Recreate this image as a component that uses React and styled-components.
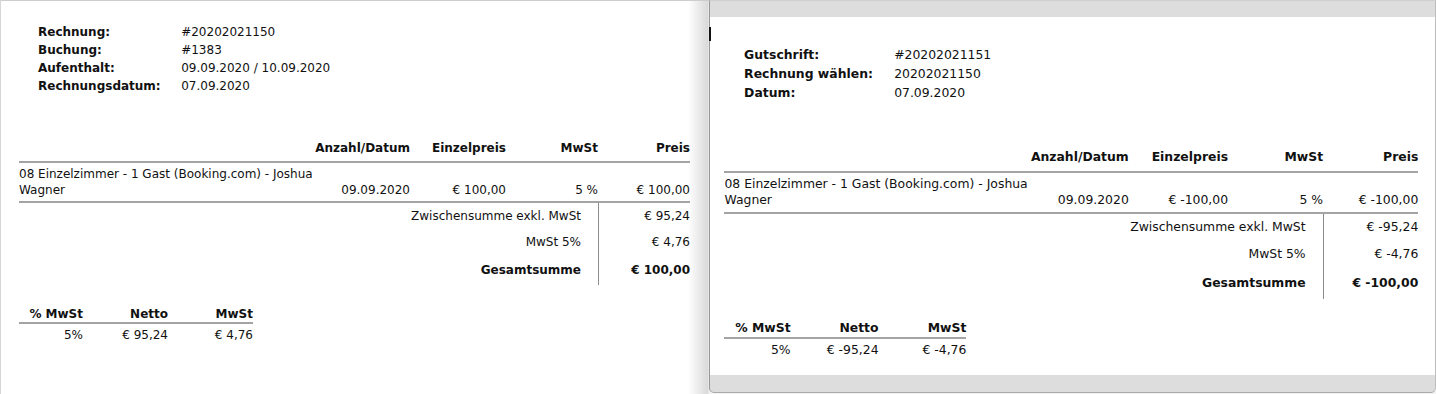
import React from "react";
import styled, { createGlobalStyle } from "styled-components";

const Global = createGlobalStyle`
  html, body { margin: 0; padding: 0; background: #f3f3f3; }
  body { font-family: "DejaVu Sans", "Noto Sans", sans-serif; font-size: 12px; color: #111; }
  * { box-sizing: border-box; }
`;

const Page = styled.div`
  display: flex;
  width: 1436px;
  height: 394px;
  overflow: hidden;
`;

const LeftPane = styled.div`
  width: 709px;
  height: 394px;
  flex: none;
  border-top: 1px solid #cdcdcd;
  border-left: 1px solid #d6d6d6;
  background: linear-gradient(to right, #fff calc(100% - 21px), #d9d9d9 calc(100% - 1px), #f4f4f4);
`;

const RightWindow = styled.div`
  position: relative;
  flex: 1;
  height: 393px;
  display: flex;
  flex-direction: column;
  padding: 16px 0 17px;
  background: #dddddd;
  border-top: 1px solid #cfcfcf;
  border-left: 1px solid #979797;
  border-right: 1px solid #bdbdbd;
  border-bottom: 1px solid #a9a9a9;
  border-radius: 0 0 5px 5px;
  &::before {
    content: "";
    position: absolute;
    left: -1px;
    top: 26px;
    width: 2px;
    height: 14px;
    background: #111;
  }
`;

const WhitePane = styled.div`
  flex: 1;
  background: #fff;
`;

const Sheet = styled.div`
  zoom: ${(p) => p.$zoom || 1};
  width: ${(p) => 671 + p.$padLeft}px;
  padding: ${(p) => p.$padTop}px 0 0 ${(p) => p.$padLeft}px;
  line-height: 16px;
`;

const MetaList = styled.dl`
  display: grid;
  grid-template-columns: max-content max-content;
  column-gap: 20.5px;
  margin: 0 0 0 19px;
  line-height: 18px;
`;

const MetaLabel = styled.dt`
  font-weight: bold;
  margin: 0;
`;

const MetaValue = styled.dd`
  margin: 0;
`;

const ItemTable = styled.div`
  width: 671px;
  margin-top: 45px;
`;

const Row = styled.div`
  display: grid;
  grid-template-columns: 1fr 96px 96px 92px 92px;
  align-items: end;
  border-bottom: 2px solid #a4a4a4;
  padding: ${(p) => (p.$head ? "0 0 5px" : "3px 0 3px")};
  font-weight: ${(p) => (p.$head ? "bold" : "normal")};
`;

const Cell = styled.div`
  text-align: ${(p) => (p.$left ? "left" : "right")};
  white-space: ${(p) => (p.$left ? "normal" : "nowrap")};
`;

const SumRow = styled.div`
  display: grid;
  grid-template-columns: 1fr 92px;
  font-weight: ${(p) => (p.$bold ? "bold" : "normal")};
`;

const SumLabel = styled.div`
  text-align: right;
  padding: ${(p) => (p.$last ? "7px 17px 7px 0" : "5px 17px 5px 0")};
`;

const SumValue = styled.div`
  text-align: right;
  border-left: 1px solid #8c8c8c;
  padding: ${(p) => (p.$last ? "7px 0 7px" : "5px 0 5px")};
  white-space: nowrap;
`;

const VatTable = styled.div`
  width: 234px;
  margin-top: 21px;
`;

const VatRow = styled.div`
  display: grid;
  grid-template-columns: 64px 85px 85px;
  text-align: right;
  white-space: nowrap;
  font-weight: ${(p) => (p.$head ? "bold" : "normal")};
  border-bottom: ${(p) => (p.$head ? "2px solid #a4a4a4" : "none")};
  padding-top: ${(p) => (p.$head ? 0 : 3)}px;
`;

function Invoice({ meta, item, sums, vat, zoom, padTop, padLeft }) {
  return (
    <Sheet $zoom={zoom} $padTop={padTop} $padLeft={padLeft}>
      <MetaList>
        {meta.map(([k, v]) => (
          <React.Fragment key={k}>
            <MetaLabel>{k}</MetaLabel>
            <MetaValue>{v}</MetaValue>
          </React.Fragment>
        ))}
      </MetaList>
      <ItemTable>
        <Row $head>
          <Cell $left />
          <Cell>Anzahl/Datum</Cell>
          <Cell>Einzelpreis</Cell>
          <Cell>MwSt</Cell>
          <Cell>Preis</Cell>
        </Row>
        <Row>
          <Cell $left>{item.name}</Cell>
          <Cell>{item.date}</Cell>
          <Cell>{item.unit}</Cell>
          <Cell>{item.vat}</Cell>
          <Cell>{item.price}</Cell>
        </Row>
        {sums.map(([k, v, bold], i) => (
          <SumRow key={k} $bold={bold}>
            <SumLabel $last={i === sums.length - 1}>{k}</SumLabel>
            <SumValue $last={i === sums.length - 1}>{v}</SumValue>
          </SumRow>
        ))}
      </ItemTable>
      <VatTable>
        <VatRow $head>
          <div>% MwSt</div>
          <div>Netto</div>
          <div>MwSt</div>
        </VatRow>
        <VatRow>
          {vat.map((v, i) => (
            <div key={i}>{v}</div>
          ))}
        </VatRow>
      </VatTable>
    </Sheet>
  );
}

const itemName = "08 Einzelzimmer - 1 Gast (Booking.com) - Joshua Wagner";

export default function App() {
  return (
    <>
      <Global />
      <Page>
        <LeftPane>
          <Invoice
            padTop={22}
            padLeft={18}
            meta={[
              ["Rechnung:", "#20202021150"],
              ["Buchung:", "#1383"],
              ["Aufenthalt:", "09.09.2020 / 10.09.2020"],
              ["Rechnungsdatum:", "07.09.2020"],
            ]}
            item={{ name: itemName, date: "09.09.2020", unit: "€ 100,00", vat: "5 %", price: "€ 100,00" }}
            sums={[
              ["Zwischensumme exkl. MwSt", "€ 95,24"],
              ["MwSt 5%", "€ 4,76"],
              ["Gesamtsumme", "€ 100,00", true],
            ]}
            vat={["5%", "€ 95,24", "€ 4,76"]}
          />
        </LeftPane>
        <RightWindow>
          <WhitePane>
            <Invoice
              zoom={1.034}
              padTop={28.5}
              padLeft={14}
              meta={[
                ["Gutschrift:", "#20202021151"],
                ["Rechnung wählen:", "20202021150"],
                ["Datum:", "07.09.2020"],
              ]}
              item={{ name: itemName, date: "09.09.2020", unit: "€ -100,00", vat: "5 %", price: "€ -100,00" }}
              sums={[
                ["Zwischensumme exkl. MwSt", "€ -95,24"],
                ["MwSt 5%", "€ -4,76"],
                ["Gesamtsumme", "€ -100,00", true],
              ]}
              vat={["5%", "€ -95,24", "€ -4,76"]}
            />
          </WhitePane>
        </RightWindow>
      </Page>
    </>
  );
}
